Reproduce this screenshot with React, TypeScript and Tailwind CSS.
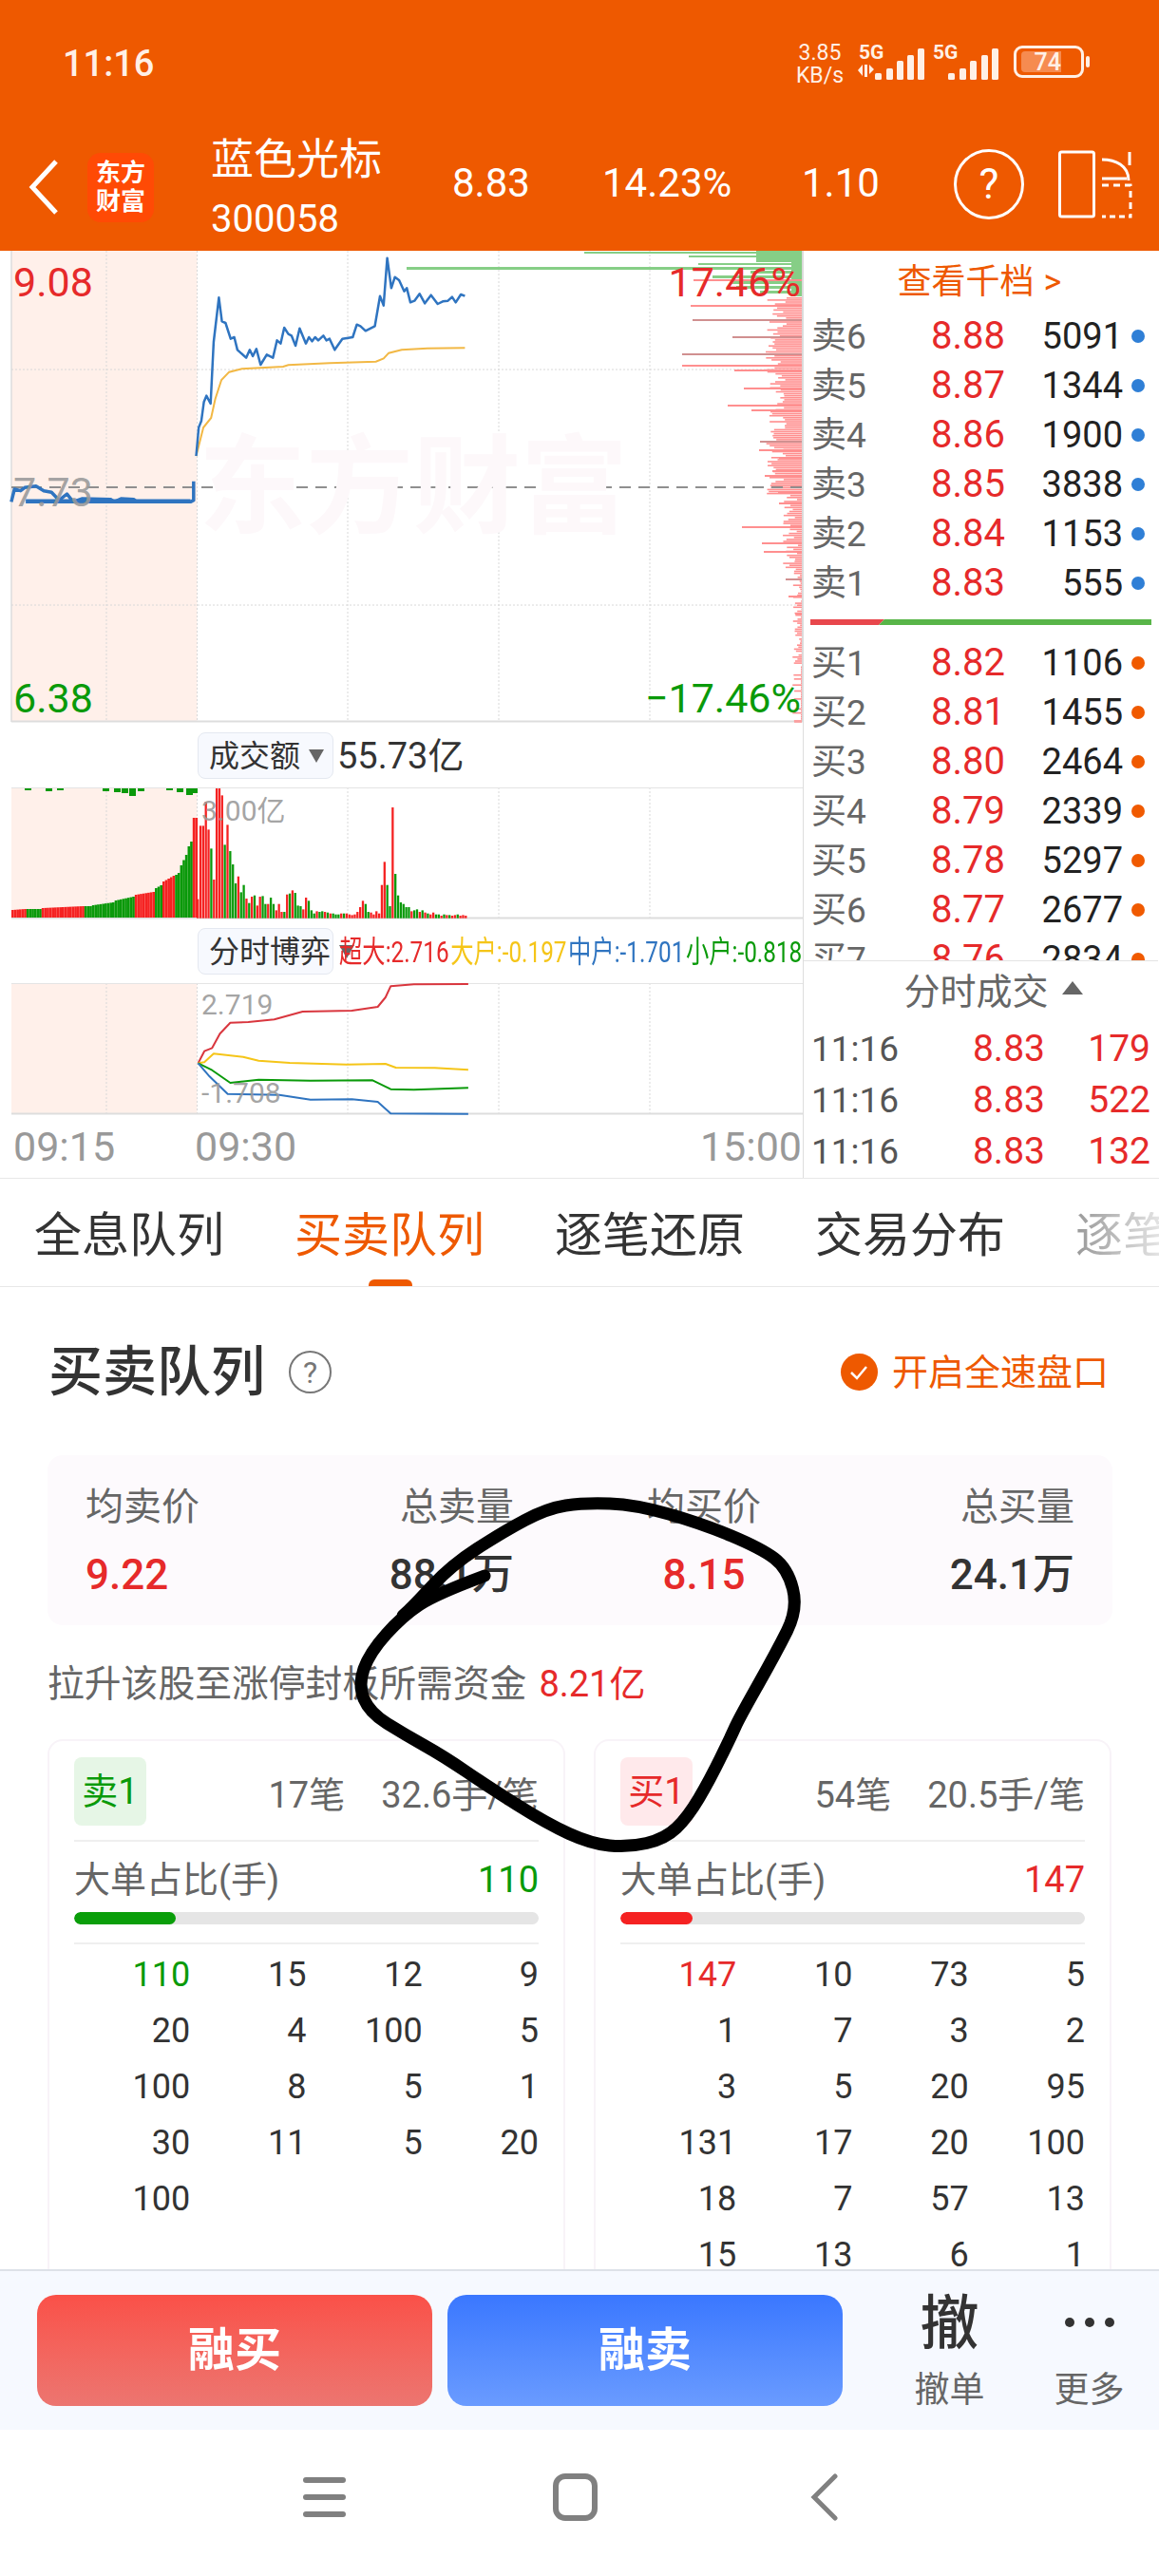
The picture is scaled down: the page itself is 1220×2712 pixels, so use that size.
const RED = "#E62A2A";
const GREEN = "#0A9A0A";

const toMain = (pts: number[][]) => pts.map(([x, y]) => `${(x / 1.845).toFixed(1)},${260 + y / 3}`).join(" ");
const toLower = (pts: number[][]) => pts.map(([x, y]) => `${(x / 1.836).toFixed(1)},${(760 + y / 3).toFixed(1)}`).join(" ");

const BLUE_PRE = [[22,805],[28,765],[40,770],[48,760],[70,755],[85,770],[100,775],[115,800],[130,780],[142,805],[160,795],[215,797],[222,805],[235,795],[260,797],[265,805],[370,805],[376,800],[376,740]];
const BLUE_DAY = [[381,660],[386,570],[391,550],[396,490],[401,470],[409,495],[415,300],[425,160],[431,235],[438,240],[448,290],[455,285],[461,325],[478,350],[485,325],[491,345],[498,322],[506,372],[518,340],[530,350],[538,295],[545,305],[552,255],[560,275],[566,280],[574,312],[582,257],[594,305],[600,285],[606,298],[612,285],[618,295],[628,280],[634,295],[640,290],[650,325],[665,290],[685,285],[693,245],[700,250],[710,265],[728,250],[738,155],[745,185],[752,35],[760,130],[767,95],[775,105],[785,140],[790,130],[797,175],[805,170],[815,148],[825,178],[837,152],[850,180],[860,172],[870,170],[878,158],[885,175],[895,150],[903,155]];
const AVG_LINE = [[381,660],[395,570],[410,540],[418,480],[430,420],[445,395],[470,385],[550,378],[560,373],[640,367],[730,362],[745,352],[755,335],[780,325],[830,320],[903,319]];

const FLOW_LINES = [
  { color: "#D9363E", pts: [[383,1078],[395,1040],[410,1030],[425,985],[445,950],[480,948],[530,940],[585,915],[680,912],[730,900],[745,870],[755,835],[800,829],[905,828]] },
  { color: "#F5C518", pts: [[383,1078],[395,1075],[413,1048],[470,1058],[500,1070],[560,1077],[670,1082],[745,1080],[765,1092],[840,1093],[905,1099]] },
  { color: "#0A9A0A", pts: [[383,1078],[410,1100],[445,1140],[500,1130],[600,1133],[720,1132],[755,1160],[800,1162],[905,1156]] },
  { color: "#2F74C0", pts: [[383,1078],[405,1120],[440,1175],[540,1178],[600,1193],[680,1192],[730,1200],[755,1237],[905,1238]] },
];

// [bars, colour, height at start, height at end]
const PRE_VOLUME: [number, string, number, number][] = [
  [6, "r", 8, 9], [6, "g", 9, 9], [17, "r", 10, 12], [3, "g", 12, 12], [9, "g", 13, 16], [8, "g", 18, 22],
  [8, "r", 24, 27], [3, "g", 31, 34], [5, "r", 38, 44], [2, "g", 45, 47], [3, "g", 55, 66], [2, "g", 75, 80], [2, "r", 105, 105],
];
const DAY_VOLUME = "r380 r148 r148 r72 r160 g220 r318 r30 r30 r52 g208 r145 g228 g270 g330 r308 g358 g335 r378 g392 r372 g368 r400 r372 g370 g395 r395 g375 g395 r415 r395 r420 g420 r365 g362 r352 g360 g400 g402 r412 r375 g385 g415 g425 r418 g420 g418 r420 g422 r425 g425 g428 g428 r425 g425 r425 r428 r430 r428 r420 r405 r385 g395 g420 r422 r428 r418 r425 r335 r262 g335 g402 r90 g300 g368 g390 g395 g405 g405 r418 g415 g412 r420 g415 r422 g425 r428 r422 g428 g428 r432 g428 r430 g430 r432 r430 g428 r432 r430 r432"
  .split(" ")
  .map((s) => ({ color: s[0], h: (440 - Number(s.slice(1))) / 3 }));

const VOL_COLOR: Record<string, string> = { r: "#F52222", g: "#0A990A" };

const preBars = PRE_VOLUME.flatMap(([n, color, a, b]) =>
  Array.from({ length: n }, (_, i) => ({ color, h: a + ((b - a) * i) / Math.max(n - 1, 1) })),
);

// long rows read off the order-book profile on the right of the chart
const LONG_DEPTH: [number, number][] = [[336, 729], [321, 727], [294, 730], [354, 771], [372, 718], [384, 718], [389, 773], [408, 783], [426, 766], [431, 791], [464, 800], [473, 799], [481, 820], [495, 813], [518, 819], [554, 781], [571, 802], [609, 827], [627, 830], [645, 837], [580, 804], [529, 820], [500, 805]];
const depthRows = Array.from({ length: 225 }, (_, i) => {
  const y = 313 + i * 2.1;
  const noise = Math.abs(Math.sin(i * 12.9898) * 43758.5453) % 1;
  const base = y < 520 ? 16 + noise * 22 : y < 600 ? 4 + noise * 16 : noise * 10;
  return { y, w: y > 700 && noise < 0.7 ? 1 : base };
});
const GREEN_DEPTH: [number, number, number][] = [[265, 615, 2], [269, 725, 2], [273, 796, 3], [277, 735, 2], [281, 428, 3], [285, 790, 3], [290, 750, 3], [296, 770, 3], [301, 775, 3], [306, 800, 3]];

const PEN = [[510,1659],[459,1678],[424,1701],[389,1740],[377,1774],[389,1803],[426,1826],[467,1849],[514,1881],[576,1920],[622,1941],[661,1945],[700,1936],[724,1913],[747,1874],[770,1827],[778,1809],[817,1740],[840,1694],[829,1651],[801,1630],[739,1604],[669,1584],[615,1582],[576,1588],[529,1613],[475,1648],[436,1690],[424,1701]];

const smooth = (pts: number[][]) => {
  let d = `M${pts[0][0]} ${pts[0][1]}`;
  for (let i = 1; i < pts.length - 1; i++) {
    const mx = (pts[i][0] + pts[i + 1][0]) / 2;
    const my = (pts[i][1] + pts[i + 1][1]) / 2;
    d += ` Q${pts[i][0]} ${pts[i][1]} ${mx} ${my}`;
  }
  const last = pts[pts.length - 1];
  return `${d} L${last[0]} ${last[1]}`;
};

const ChartGrid = ({ top, bottom }: { top: number; bottom: number }) => (
  <>
    <rect x={12} y={top} width={195.5} height={bottom - top} fill="#FFF0EA" />
    {[112, 207.5, 366, 525, 684].map((x) => (
      <line key={x} x1={x} x2={x} y1={top} y2={bottom} stroke="#D8D8D8" strokeWidth={1} strokeDasharray="2 2" />
    ))}
  </>
);

const MainChart = () => (
  <div className="relative h-[497px] w-[846px] shrink-0">
    <svg className="absolute inset-0" width={846} height={497} viewBox="0 264 846 497">
      <ChartGrid top={264} bottom={760} />
      <line x1={12} x2={12} y1={264} y2={760} stroke="#DDDDDD" strokeWidth={1.5} />
      <line x1={845} x2={845} y1={264} y2={760} stroke="#CCCCCC" strokeWidth={1.5} />
      {[389, 637].map((y) => (
        <line key={y} x1={12} x2={845} y1={y} y2={y} stroke="#D8D8D8" strokeWidth={1} strokeDasharray="2 2" />
      ))}
      <line x1={12} x2={845} y1={759.5} y2={759.5} stroke="#DDDDDD" strokeWidth={2} />
      <rect x={796} y={264} width={48} height={9} fill="#86CE86" />
      <rect x={833} y={264} width={11} height={48} fill="#86CE86" />
      {GREEN_DEPTH.map(([y, x, h]) => (
        <rect key={y} x={x} y={y} width={844 - x} height={h} fill="#86CE86" />
      ))}
      {depthRows.map(({ y, w }) => (
        <rect key={y} x={844 - w} y={y} width={w} height={1.6} fill="#FF8F8F" />
      ))}
      {LONG_DEPTH.map(([y, x]) => (
        <rect key={y} x={x} y={y} width={844 - x} height={2} fill={y === 336 || y === 372 || y === 354 || y === 464 || y === 609 ? "#D09090" : "#FF8F8F"} />
      ))}
      <line x1={12} x2={845} y1={513} y2={513} stroke="#8F8F8F" strokeWidth={2} strokeDasharray="12 8" />
      <polyline points={toMain(AVG_LINE)} fill="none" stroke="#F2B845" strokeWidth={2} />
      <polyline points={toMain(BLUE_PRE)} fill="none" stroke="#2F74C0" strokeWidth={3.5} strokeLinejoin="round" />
      <polyline points={toMain(BLUE_DAY)} fill="none" stroke="#2F74C0" strokeWidth={2.5} strokeLinejoin="round" />
      <polyline points={toMain([[50,803],[370,803]])} fill="none" stroke="#2F74C0" strokeWidth={4.5} />
    </svg>
    <div className="absolute left-[209px] top-[193px] text-[113px] font-bold leading-none text-[#FDF8FA]">东方财富</div>
    <div className="absolute left-[14px] top-[12px] text-[43px] leading-none" style={{ color: RED }}>9.08</div>
    <div className="absolute right-[3px] top-[12px] text-[43px] leading-none" style={{ color: RED }}>17.46%</div>
    <div className="absolute left-[14px] top-[233px] text-[43px] leading-none text-[#999999]/90">7.73</div>
    <div className="absolute left-[14px] top-[450px] text-[43px] leading-none" style={{ color: GREEN }}>6.38</div>
    <div className="absolute right-[3px] top-[450px] text-[43px] leading-none" style={{ color: GREEN }}>−17.46%</div>
  </div>
);

const Chip = ({ label }: { label: string }) => (
  <div className="flex h-[49px] w-[143px] shrink-0 items-center gap-[9px] rounded-lg border border-[#E4E8F0] bg-[#F7F9FE] pl-[11px]">
    <span className="whitespace-nowrap text-[32px] leading-none text-[#333333]">{label}</span>
    <span className="h-0 w-0 border-x-[8px] border-t-[14px] border-x-transparent border-t-[#666666]" />
  </div>
);

const VolumeChart = () => {
  const dayPitch = (492 - 207) / DAY_VOLUME.length;
  return (
    <div className="relative h-[139px] w-[846px] shrink-0">
      <svg className="absolute inset-0" width={846} height={139} viewBox="0 829 846 139">
        <ChartGrid top={829} bottom={967} />
        <line x1={12} x2={845} y1={829.5} y2={829.5} stroke="#E4E4E4" strokeWidth={1} />
        <line x1={12} x2={845} y1={966.5} y2={966.5} stroke="#DDDDDD" strokeWidth={2} />
        {[[26,2],[48,3],[60,2],[108,3],[120,4],[128,5],[136,8],[145,3],[175,2],[186,4],[196,7],[201,5]].map(([x, h]) => (
          <rect key={x} x={x} y={830} width={7} height={h} fill="#0A990A" />
        ))}
        {preBars.map((b, i) => (
          <rect key={i} x={12 + i * 2.65} y={966 - b.h} width={2.65} height={b.h} fill={VOL_COLOR[b.color]} />
        ))}
        {DAY_VOLUME.map((b, i) => (
          <rect key={i} x={207 + i * dayPitch} y={966.7 - b.h} width={2.3} height={b.h} fill={VOL_COLOR[b.color]} />
        ))}
      </svg>
      <div className="absolute left-[212px] top-[10px] text-[30px] leading-none text-[#999999]/90">3.00亿</div>
    </div>
  );
};

const FlowChart = () => (
  <div className="relative h-[139px] w-[846px] shrink-0">
    <svg className="absolute inset-0" width={846} height={139} viewBox="0 1035 846 139">
      <ChartGrid top={1035} bottom={1173} />
      <line x1={12} x2={845} y1={1035.5} y2={1035.5} stroke="#E4E4E4" strokeWidth={1} />
      <line x1={12} x2={845} y1={1172.5} y2={1172.5} stroke="#DDDDDD" strokeWidth={2} />
      {FLOW_LINES.map((l) => (
        <polyline key={l.color} points={toLower(l.pts)} fill="none" stroke={l.color} strokeWidth={2} strokeLinejoin="round" />
      ))}
    </svg>
    <div className="absolute left-[212px] top-[8px] text-[30px] leading-none text-[#999999]/90">2.719</div>
    <div className="absolute left-[212px] top-[101px] text-[30px] leading-none text-[#999999]/90">-1.708</div>
  </div>
);

const LeftPanel = () => (
  <div className="flex w-[846px] shrink-0 flex-col overflow-hidden border-r border-[#DDDDDD]">
    <MainChart />
    <div className="flex h-[68px] items-center pl-[208px] pt-[1px]">
      <Chip label="成交额" />
      <span className="ml-[4px] text-[38px] leading-none text-[#333333]">55.73亿</span>
    </div>
    <VolumeChart />
    <div className="flex h-[67px] items-center pl-[208px]">
      <Chip label="分时博弈" />
      <div className="ml-[6px] flex w-[640px] shrink-0 origin-left scale-x-[0.76] gap-[2px] whitespace-nowrap text-[32px] leading-none">
        <span className="text-[#E62A2A]">超大:2.716</span>
        <span className="text-[#F5C518]">大户:-0.197</span>
        <span className="text-[#2F74C0]">中户:-1.701</span>
        <span className="text-[#0A9A0A]">小户:-0.818</span>
      </div>
    </div>
    <FlowChart />
    <div className="flex h-[66px] items-center pl-[14px] pr-[1px] text-[43px] leading-none text-[#999999]">
      <span className="w-[191px]">09:15</span>
      <span>09:30</span>
      <span className="ml-auto">15:00</span>
    </div>
  </div>
);

const ASKS = [["卖6", "8.88", "5091"], ["卖5", "8.87", "1344"], ["卖4", "8.86", "1900"], ["卖3", "8.85", "3838"], ["卖2", "8.84", "1153"], ["卖1", "8.83", "555"]];
const BIDS = [["买1", "8.82", "1106"], ["买2", "8.81", "1455"], ["买3", "8.80", "2464"], ["买4", "8.79", "2339"], ["买5", "8.78", "5297"], ["买6", "8.77", "2677"], ["买7", "8.76", "2834"]];
const TICKS = [["11:16", "8.83", "179"], ["11:16", "8.83", "522"], ["11:16", "8.83", "132"]];

const BookRow = ({ row, dot }: { row: string[]; dot: string }) => (
  <div className="flex h-[52px] shrink-0 items-center pl-[8px]">
    <span className="w-[102px] text-[37px] leading-none text-[#666666]">{row[0]}</span>
    <span className="w-[102px] text-right text-[40px] leading-none text-[#E62A2A]">{row[1]}</span>
    <span className="w-[124px] text-right text-[38px] leading-none text-[#222222]">{row[2]}</span>
    <span className={`ml-[9px] size-[14px] rounded-full ${dot}`} />
  </div>
);

const RightPanel = () => (
  <div className="flex h-[976px] w-[373px] shrink-0 flex-col overflow-hidden">
    <div className="flex h-[64px] shrink-0 items-center justify-center gap-[10px] pr-[3px] pt-[2px] text-[36px] leading-none text-[#EE5900]">
      <span>查看千档</span>
      <span>&gt;</span>
    </div>
    {ASKS.map((r) => (
      <BookRow key={r[0]} row={r} dot="bg-[#2F7FD6]" />
    ))}
    <div className="mx-[7px] mt-[12px] flex h-[6px] shrink-0">
      <div className="w-[78px] bg-[#E8474C] [clip-path:polygon(0_0,100%_0,calc(100%-6px)_100%,0_100%)]" />
      <div className="-ml-[6px] flex-1 bg-[#58B548] [clip-path:polygon(6px_0,100%_0,100%_100%,0_100%)]" />
    </div>
    <div className="mt-[14px] h-[340px] shrink-0 overflow-hidden border-b border-[#E4E4E4]">
      {BIDS.map((r) => (
        <BookRow key={r[0]} row={r} dot="bg-[#F05A00]" />
      ))}
    </div>
    <div className="flex h-[64px] shrink-0 items-center justify-center gap-[14px] pl-[26px]">
      <span className="text-[38px] leading-none text-[#666666]">分时成交</span>
      <span className="mb-[8px] h-0 w-0 border-x-[11px] border-b-[14px] border-x-transparent border-b-[#666666]" />
    </div>
    {TICKS.map((r) => (
      <div key={r[2]} className="flex h-[54px] shrink-0 items-center pl-[8px] pt-[2px]">
        <span className="w-[120px] text-[37px] leading-none text-[#555555]">{r[0]}</span>
        <span className="w-[126px] text-right text-[39px] leading-none text-[#E62A2A]">{r[1]}</span>
        <span className="w-[111px] text-right text-[39px] leading-none text-[#E62A2A]">{r[2]}</span>
      </div>
    ))}
  </div>
);

const StatusBar = () => (
  <div className="flex h-[130px] shrink-0 items-center pl-[66px] text-[#FFF0E6]">
    <span className="mt-[4px] w-[96px] text-[38px] font-medium leading-none">11:16</span>
    <div className="ml-[676px] mt-[6px] flex w-[50px] flex-col items-center text-[23px] leading-[24px]">
      <span>3.85</span>
      <span>KB/s</span>
    </div>
    <div className="relative ml-[15px] h-[38px] w-[83px]">
      <span className="absolute left-[1px] -top-[1px] text-[21px] font-bold leading-none">5G</span>
      <svg className="absolute inset-0" width={83} height={38} viewBox="0 0 83 38" fill="currentColor">
        <path d="M0 28l5-6v12zM7 22h3v13H7zM12 22l5 5-5 5z" />
        <rect x={18} y={31} width={7} height={7} rx={1.5} />
        <rect x={30} y={26} width={7} height={12} rx={1.5} />
        <rect x={41} y={18} width={7} height={20} rx={1.5} />
        <rect x={52} y={12} width={7} height={26} rx={1.5} />
        <rect x={63} y={5} width={7} height={33} rx={1.5} />
      </svg>
    </div>
    <div className="relative -ml-[4px] h-[38px] w-[70px]">
      <span className="absolute left-0 -top-[1px] text-[21px] font-bold leading-none">5G</span>
      <svg className="absolute inset-0" width={70} height={38} viewBox="0 0 70 38" fill="currentColor">
        <rect x={16} y={31} width={7} height={7} rx={1.5} />
        <rect x={28} y={26} width={7} height={12} rx={1.5} />
        <rect x={39} y={18} width={7} height={20} rx={1.5} />
        <rect x={51} y={12} width={7} height={26} rx={1.5} />
        <rect x={62} y={5} width={7} height={33} rx={1.5} />
      </svg>
    </div>
    <div className="relative ml-[15px] flex h-[34px] w-[74px] items-center rounded-[9px] border-[3px] border-[#FFF0E6]">
      <div className="ml-[5px] flex h-[22px] w-[42px] items-center justify-end rounded-l-[4px] bg-[#F68B50]">
        <span className="text-[25px] font-medium leading-none">74</span>
      </div>
      <span className="absolute -right-[9px] top-[8px] h-[12px] w-[4px] rounded-full bg-[#FFF0E6]" />
    </div>
  </div>
);

const NavRow = () => (
  <div className="flex h-[134px] shrink-0 items-center pl-[30px] text-white">
    <svg width={32} height={58} viewBox="0 0 32 58" fill="none" stroke="currentColor" strokeWidth={5}>
      <path d="M29 2L4 29l25 27" />
    </svg>
    <div className="ml-[30px] flex h-[73px] w-[70px] flex-col items-center justify-center rounded-[14px] bg-[#FF4A05] text-[26px] font-bold leading-[30px]">
      <span>东方</span>
      <span>财富</span>
    </div>
    <div className="ml-[60px] mt-[3px] flex w-[254px] flex-col gap-[20px]">
      <span className="text-[45px] leading-none">蓝色光标</span>
      <span className="text-[40px] leading-none">300058</span>
    </div>
    <span className="-mt-[9px] w-[158px] text-[42px] leading-none">8.83</span>
    <span className="-mt-[9px] w-[210px] text-[42px] leading-none">14.23%</span>
    <span className="-mt-[9px] w-[160px] text-[42px] leading-none">1.10</span>
    <div className="-mt-[6px] flex size-[74px] items-center justify-center rounded-full border-[3px] border-white text-[44px] leading-none">?</div>
    <svg className="-mt-[6px] ml-[36px]" width={78} height={72} viewBox="0 0 78 72" fill="none" stroke="currentColor" strokeWidth={3}>
      <rect x={1.5} y={2} width={36} height={68} rx={2} />
      <path d="M46 37h30v33h-2M76 44v6M76 56v6M70 70h-6M60 70h-6M50 70h-4" strokeDasharray="7 5" />
      <path d="M46 10c14 0 28 6 28 22M75 2v14M46 30h26" />
    </svg>
  </div>
);

const TABS = ["全息队列", "买卖队列", "逐笔还原", "交易分布"];

const Tabs = () => (
  <div className="relative flex h-[115px] shrink-0 items-center gap-[74px] overflow-hidden border-y border-[#E8E8E8] pl-[36px] pt-[7px] text-[50px] leading-none text-[#333333]">
    {TABS.map((t) => (
      <span key={t} className={t === "买卖队列" ? "whitespace-nowrap text-[#EE5900]" : "whitespace-nowrap"}>
        {t}
      </span>
    ))}
    <span className="whitespace-nowrap bg-gradient-to-r from-[#999999] to-[#EEEEEE] bg-clip-text text-transparent">逐笔</span>
    <span className="absolute bottom-0 left-[388px] h-[7px] w-[46px] rounded-t-md bg-[#EE5900]" />
  </div>
);

const STATS = [
  { label: "均卖价", value: "9.22", cls: "w-[122px] ml-[40px] items-start text-[#E62A2A]" },
  { label: "总卖量", value: "88.1万", cls: "w-[122px] ml-[207px] items-end text-[#333333]" },
  { label: "均买价", value: "8.15", cls: "w-[120px] ml-[140px] items-center text-[#E62A2A]" },
  { label: "总买量", value: "24.1万", cls: "w-[122px] ml-[208px] items-end text-[#333333]" },
];

const CardHead = ({ tag, tagCls, count, avg }: { tag: string; tagCls: string; count: string; avg: string }) => (
  <div className="flex h-[89px] shrink-0 items-start border-b-2 border-[#EFEFEF]">
    <span className={`flex h-[72px] w-[76px] items-center justify-center rounded-lg text-[38px] leading-none ${tagCls}`}>{tag}</span>
    <span className="ml-auto mt-[21px] text-[38px] leading-none text-[#666666]">{count}</span>
    <span className="ml-[38px] mt-[21px] text-[38px] leading-none text-[#666666]">{avg}</span>
  </div>
);

const SELL_ROWS = ["110", "15", "12", "9", "20", "4", "100", "5", "100", "8", "5", "1", "30", "11", "5", "20", "100"];
const BUY_ROWS = ["147", "10", "73", "5", "1", "7", "3", "2", "3", "5", "20", "95", "131", "17", "20", "100", "18", "7", "57", "13", "15", "13", "6", "1"];

const QueueCard = ({ tag, tagCls, count, avg, big, color, barCls, fillWidth, rows }: { tag: string; tagCls: string; count: string; avg: string; big: string; color: string; barCls: string; fillWidth: string; rows: string[] }) => (
  <div className="h-[600px] w-[545px] shrink-0 rounded-t-2xl border-2 border-b-0 border-[#F8F3F8] px-[26px] pt-[17px]">
    <CardHead tag={tag} tagCls={tagCls} count={count} avg={avg} />
    <div className="flex h-[74px] items-center justify-between pt-[6px] text-[38px] leading-none">
      <span className="text-[#666666]">大单占比(手)</span>
      <span className={color}>{big}</span>
    </div>
    <div className="h-[13px] overflow-hidden rounded-full bg-[#E5E5E5]">
      <div className={`h-full rounded-full ${barCls} ${fillWidth}`} />
    </div>
    <div className="mt-[19px] grid grid-cols-4 border-t-2 border-[#EFEFEF] pt-[3px] text-right text-[36px] leading-[59px] text-[#333333]">
      {rows.map((n, i) => (
        <span key={i} className={i === 0 ? color : ""}>{n}</span>
      ))}
    </div>
  </div>
);

const QueueSection = () => (
  <div className="h-[1034px] shrink-0 overflow-hidden">
    <div className="flex h-[177px] items-center pl-[51px] pr-[53px] pt-[2px]">
      <span className="text-[57px] font-medium leading-none text-[#333333]">买卖队列</span>
      <span className="ml-[25px] flex size-[45px] items-center justify-center rounded-full border-2 border-[#777777] text-[32px] leading-none text-[#777777]">?</span>
      <span className="ml-auto flex size-[39px] items-center justify-center rounded-full bg-[#EE5900]">
        <svg width={22} height={18} viewBox="0 0 22 18" fill="none" stroke="white" strokeWidth={2.5}>
          <path d="M3 9l6 6L19 3" />
        </svg>
      </span>
      <span className="ml-[15px] text-[38px] leading-none text-[#EE5900]">开启全速盘口</span>
    </div>
    <div className="mx-[50px] flex h-[179px] w-[1121px] rounded-2xl bg-[#FDFAFD] pt-[35px]">
      {STATS.map((s) => (
        <div key={s.label} className={`flex shrink-0 flex-col gap-[29px] ${s.cls}`}>
          <span className="text-[40px] leading-none text-[#666666]">{s.label}</span>
          <span className="whitespace-nowrap text-[44px] font-medium leading-none">{s.value}</span>
        </div>
      ))}
    </div>
    <div className="flex h-[120px] items-center pl-[50px] pt-[4px] text-[38.8px] leading-none text-[#666666]">
      拉升该股至涨停封板所需资金
      <span className="ml-[13px] text-[38px] text-[#E62A2A]">8.21亿</span>
    </div>
    <div className="flex gap-[30px] pl-[50px]">
      <QueueCard tag="卖1" tagCls="bg-[#E6F6E6] text-[#0A9A0A]" count="17笔" avg="32.6手/笔" big="110" color="text-[#0A9A0A]" barCls="bg-[#0A9E0A]" fillWidth="w-[107px]" rows={SELL_ROWS} />
      <QueueCard tag="买1" tagCls="bg-[#FFE9EB] text-[#E62A2A]" count="54笔" avg="20.5手/笔" big="147" color="text-[#E62A2A]" barCls="bg-[#F52222]" fillWidth="w-[76px]" rows={BUY_ROWS} />
    </div>
  </div>
);

const ActionBar = () => (
  <div className="flex h-[169px] shrink-0 border-t-2 border-[#DDE1E8] bg-[#F6F9FF] pl-[39px] pt-[25px]">
    <div className="flex h-[117px] w-[416px] items-center justify-center rounded-[20px] bg-gradient-to-b from-[#FA5048] to-[#EC7570] text-[49px] font-bold leading-none text-white">融买</div>
    <div className="ml-[16px] flex h-[117px] w-[416px] items-center justify-center rounded-[20px] bg-gradient-to-b from-[#3A77FF] to-[#6A9BFF] text-[49px] font-bold leading-none text-white">融卖</div>
    <div className="ml-[75px] flex w-[75px] flex-col items-center">
      <span className="h-[82px] text-[62px] font-medium leading-[62px] text-[#333333]">撤</span>
      <span className="text-[37px] leading-none text-[#666666]">撤单</span>
    </div>
    <div className="ml-[72px] flex w-[75px] flex-col items-center">
      <span className="flex h-[82px] items-start gap-[11px] pt-[24px]">
        <i className="size-[10px] rounded-full bg-[#333333]" />
        <i className="size-[10px] rounded-full bg-[#333333]" />
        <i className="size-[10px] rounded-full bg-[#333333]" />
      </span>
      <span className="text-[37px] leading-none text-[#666666]">更多</span>
    </div>
  </div>
);

const NavBar = () => (
  <div className="flex flex-1 items-center bg-white pb-[12px] text-[#808080]">
    <svg className="ml-[319px]" width={46} height={48} viewBox="0 0 46 48" fill="currentColor">
      <rect x={0} y={3} width={45} height={6} rx={3} />
      <rect x={0} y={21} width={45} height={6} rx={3} />
      <rect x={0} y={39} width={45} height={6} rx={3} />
    </svg>
    <svg className="ml-[217px]" width={48} height={50} viewBox="0 0 48 50" fill="none" stroke="currentColor" strokeWidth={6}>
      <rect x={3} y={3} width={41} height={44} rx={10} />
    </svg>
    <svg className="ml-[222px]" width={30} height={50} viewBox="0 0 30 50" fill="none" stroke="currentColor" strokeWidth={5} strokeLinecap="round">
      <path d="M27 3L5 25l22 22" />
    </svg>
  </div>
);

export default function App() {
  return (
    <div className="relative flex h-[2712px] w-[1220px] flex-col overflow-hidden bg-white font-[Roboto,'Noto_Sans_CJK_SC',sans-serif]">
      <div className="flex h-[264px] shrink-0 flex-col bg-[#EE5900]">
        <StatusBar />
        <NavRow />
      </div>
      <div className="flex h-[976px] shrink-0">
        <LeftPanel />
        <RightPanel />
      </div>
      <Tabs />
      <QueueSection />
      <ActionBar />
      <NavBar />
      <svg className="pointer-events-none absolute inset-0" width={1220} height={2712} viewBox="0 0 1220 2712" fill="none">
        <path d={smooth(PEN)} stroke="#000000" strokeWidth={13} strokeLinecap="round" strokeLinejoin="round" />
      </svg>
    </div>
  );
}
